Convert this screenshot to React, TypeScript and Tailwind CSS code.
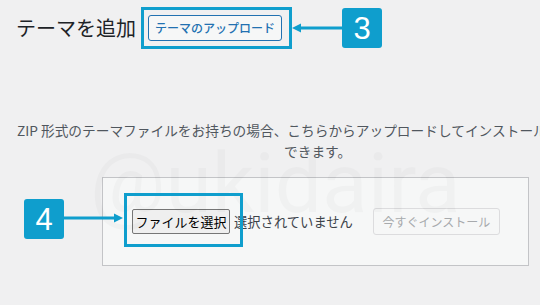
import React from "react";

const jp = { fontFamily: '"Noto Sans CJK JP", "Noto Sans", sans-serif' };

export default function App() {
  return (
    <div
      className="relative w-[540px] h-[305px] overflow-hidden bg-[#f0f0f1] flex flex-col"
      style={jp}
    >
      {/* Header row */}
      <div className="flex items-center mt-[7px] pl-[16px] h-[42px]">
        <h1 className="text-[20px] leading-[24px] font-normal text-[#1d2327] whitespace-nowrap">
          テーマを追加
        </h1>
        <div className="ml-[5px] w-[151px] h-[42px] border-[3px] border-[#0f9ecd] pl-[4px] pt-[5px] box-border">
          <button className="w-[134px] h-[26px] border border-[#2271b1] rounded-[3px] bg-[#f6f7f7] text-[#2271b1] text-[12px] leading-[24px] font-medium whitespace-nowrap flex items-center justify-center">
            テーマのアップロード
          </button>
        </div>
        <svg width="50" height="12" viewBox="0 0 50 12" className="block">
          <line x1="7" y1="6" x2="50" y2="6" stroke="#0f9ecd" strokeWidth="3" />
          <polygon points="0,6 9,1.5 9,10.5" fill="#0f9ecd" />
        </svg>
        <div
          className="w-[40px] h-[40px] rounded-[3px] bg-[#0f9ecd] text-white flex items-center justify-center text-[31px] leading-none"
          style={{ fontFamily: '"Liberation Sans", Arial, sans-serif' }}
        >
          3
        </div>
      </div>

      {/* Description */}
      <div className="mt-[71px] text-[13.7px] leading-[21px] text-[#50575e]">
        <div className="pl-[17px] whitespace-nowrap">
          ZIP 形式のテーマファイルをお持ちの場合、こちらからアップロードしてインストール
        </div>
        <div className="pl-[284px] whitespace-nowrap">できます。</div>
      </div>

      {/* Upload box */}
      <div className="mt-[15px] ml-[102px] w-[427px] h-[89px] border border-[#c3c4c7] bg-[#f6f7f7] flex items-center pl-[29px] box-border">
        <button className="h-[25px] w-[98px] border border-[#767676] rounded-[2px] bg-[#efefef] text-[13px] leading-[23px] text-black whitespace-nowrap flex items-center justify-center">
          ファイルを選択
        </button>
        <span className="ml-[4px] text-[13.3px] text-[#3c434a] whitespace-nowrap">
          選択されていません
        </span>
        <button className="ml-[20px] h-[27px] w-[127px] border border-[#dcdcde] rounded-[3px] bg-[#f6f7f7] text-[12px] text-[#a7aaad] whitespace-nowrap flex items-center justify-center">
          今すぐインストール
        </button>
      </div>

      {/* Watermark */}
      <div
        className="absolute left-[90px] top-[142px] text-[84px] leading-none text-[rgba(0,0,0,0.022)] pointer-events-none select-none"
        style={{ fontFamily: 'Roboto, "Liberation Sans", sans-serif' }}
      >
        @ukidaira
      </div>

      {/* Annotation 4 */}
      <div className="absolute left-[124px] top-[193px] w-[119px] h-[54px] border-[3px] border-[#0f9ecd] pointer-events-none" />
      <svg
        width="59"
        height="12"
        viewBox="0 0 59 12"
        className="absolute left-[64px] top-[212px]"
      >
        <line x1="0" y1="6" x2="52" y2="6" stroke="#0f9ecd" strokeWidth="3" />
        <polygon points="59,6 50,1.5 50,10.5" fill="#0f9ecd" />
      </svg>
      <div
        className="absolute left-[24px] top-[199px] w-[40px] h-[40px] rounded-[3px] bg-[#0f9ecd] text-white flex items-center justify-center text-[31px] leading-none"
        style={{ fontFamily: '"Liberation Sans", Arial, sans-serif' }}
      >
        4
      </div>
    </div>
  );
}
